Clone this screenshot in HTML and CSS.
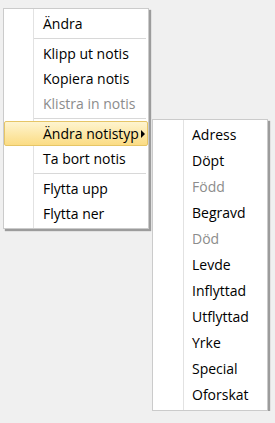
FILE: index.html
```html
<!DOCTYPE html>
<html lang="sv">
<head>
    <meta charset="UTF-8">
    <meta name="viewport" content="width=device-width, initial-scale=1.0">
    <title>Notismeny</title>
    <link rel="stylesheet" href="styles.css">
</head>
<body>
    <div class="menus">
        <!-- Context menu -->
        <ul class="menu main-menu">
            <li class="item">Ändra</li>
            <li class="separator"></li>
            <li class="item">Klipp ut notis</li>
            <li class="item">Kopiera notis</li>
            <li class="item disabled">Klistra in notis</li>
            <li class="separator"></li>
            <li class="item active has-sub">Ändra notistyp</li>
            <li class="item">Ta bort notis</li>
            <li class="separator"></li>
            <li class="item">Flytta upp</li>
            <li class="item">Flytta ner</li>
        </ul>

        <!-- Submenu for notistyp -->
        <ul class="menu sub-menu">
            <li class="item">Adress</li>
            <li class="item">Döpt</li>
            <li class="item disabled">Född</li>
            <li class="item">Begravd</li>
            <li class="item disabled">Död</li>
            <li class="item">Levde</li>
            <li class="item">Inflyttad</li>
            <li class="item">Utflyttad</li>
            <li class="item">Yrke</li>
            <li class="item">Special</li>
            <li class="item">Oforskat</li>
        </ul>
    </div>
</body>
</html>
```

FILE: styles.css
```css
/* Global Styles */
body {
    margin: 0;
    background-color: #f0f0f0;
    font-family: "Open Sans", "Noto Sans", sans-serif;
    font-size: 14px;
    color: #000;
}

/* Layout */
.menus {
    display: flex;
    align-items: flex-start;
    gap: 3px;
    padding: 8px 0 0 3px;
}

/* Menu box */
.menu {
    --gutter: 29px;
    list-style: none;
    margin: 0;
    padding: 2px 0;
    border: 1px solid #cbcbcb;
    background:
        linear-gradient(#e2e2e2, #e2e2e2) no-repeat var(--gutter) 0 / 1px 100%,
        #ffffff;
    box-shadow: 2px 2px 1px rgba(0, 0, 0, 0.35);
}

.main-menu {
    width: 144px;
}

.sub-menu {
    --gutter: 30px;
    width: 114px;
    margin-top: 111px;
}

/* Items */
.item {
    position: relative;
    height: 25px;
    line-height: 25px;
    padding-left: 39px;
    white-space: nowrap;
}

.sub-menu .item {
    height: 26px;
    line-height: 26px;
}

.item.disabled {
    color: #8c8c8c;
}

.item.active {
    padding-left: 38px;
    height: 23px;
    line-height: 23px;
    border: 1px solid #e6c566;
    border-radius: 2px;
    background: linear-gradient(#fef4cf, #fbdc84);
}

/* Submenu arrow */
.has-sub::after {
    content: "";
    position: absolute;
    right: 2px;
    top: 8px;
    border-left: 4px solid #000;
    border-top: 4px solid transparent;
    border-bottom: 4px solid transparent;
}

/* Separator */
.separator {
    height: 5px;
    background: linear-gradient(#d8d8d8, #d8d8d8) no-repeat 30px 2px / calc(100% - 32px) 1px;
}
```
